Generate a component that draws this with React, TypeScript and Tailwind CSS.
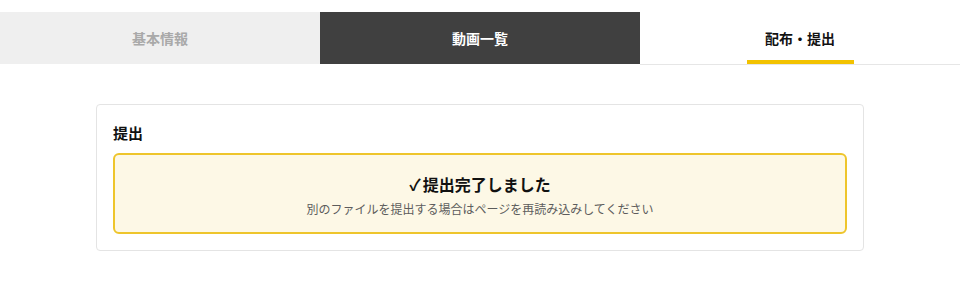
import React from 'react';

const tabs = [
  { label: '基本情報', state: 'inactive' },
  { label: '動画一覧', state: 'dark' },
  { label: '配布・提出', state: 'active' },
] as const;

export default function App() {
  return (
    <div
      className="w-[960px] h-[303px] bg-white pt-3"
      style={{ fontFamily: '"Noto Sans CJK JP", "Noto Sans", sans-serif' }}
    >
      {/* Tabs */}
      <div className="grid grid-cols-3 h-[53px]">
        {tabs.map((tab) => {
          if (tab.state === 'inactive') {
            return (
              <div
                key={tab.label}
                className="h-[52px] bg-[#efefef] text-[#a9a9a9] text-sm font-bold flex items-center justify-center"
              >
                {tab.label}
              </div>
            );
          }
          if (tab.state === 'dark') {
            return (
              <div
                key={tab.label}
                className="h-[52px] bg-[#404040] text-white text-sm font-bold flex items-center justify-center"
              >
                {tab.label}
              </div>
            );
          }
          return (
            <div
              key={tab.label}
              className="h-[53px] bg-white border-b border-[#e6e6e6] flex justify-center"
            >
              <span className="h-[52px] w-[107px] pt-1 flex items-center justify-center border-b-4 border-[#f2c200] text-sm font-bold text-[#111]">
                {tab.label}
              </span>
            </div>
          );
        })}
      </div>

      {/* Content */}
      <div className="px-24 pt-[39px]">
        <div className="border border-[#e4e4e4] rounded p-4">
          <h2 className="text-[15px] font-bold text-[#111] leading-6 mb-2">提出</h2>
          <div className="border-2 border-[#eec52c] bg-[#fdf8e6] rounded-md h-[81px] pt-[3px] flex flex-col items-center justify-center">
            <p className="text-base font-bold text-[#111] leading-[22px]">
              <span className="mr-[2px]">✓</span>提出完了しました
            </p>
            <p className="text-xs text-[#5c5c5c] leading-[18px] mt-[5px]">
              別のファイルを提出する場合はページを再読み込みしてください
            </p>
          </div>
        </div>
      </div>
    </div>
  );
}
